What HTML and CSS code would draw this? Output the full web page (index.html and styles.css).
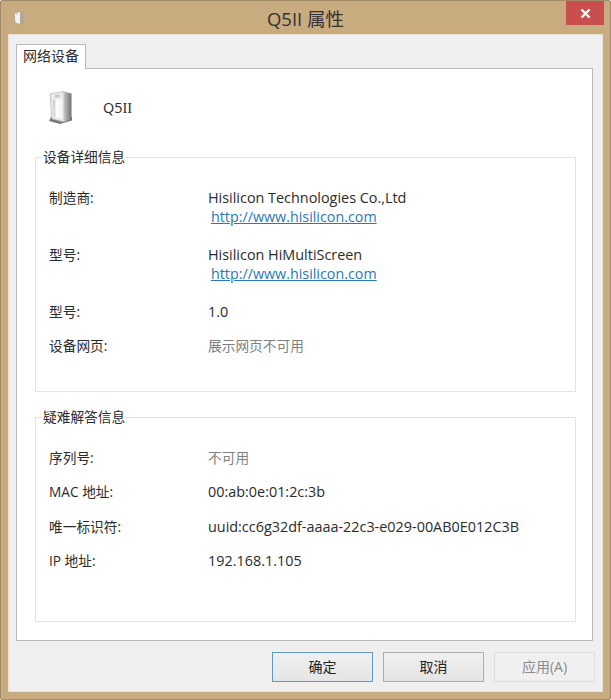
FILE: index.html
```html
<!DOCTYPE html>
<html lang="zh-CN">
<head>
<meta charset="utf-8">
<title>Q5II 属性</title>
<link rel="stylesheet" href="styles.css">
</head>
<body>
<div class="window">
  <header class="titlebar">
    <svg class="title-icon" viewBox="0 0 14 18" width="11" height="14" aria-hidden="true">
      <path d="M1.5 2.5 L9 1 L12.5 2.5 L12.5 15.5 L8 17 L2.5 15.5 Z" fill="#f2f1ed" stroke="#8d8a82" stroke-width="0.7"/>
      <path d="M9 1.5 L12.5 2.5 L12.5 15.5 L9 17 Z" fill="#a9a69d"/>
      <rect x="3.5" y="3.5" width="3" height="1.5" fill="#c4c9cc"/>
    </svg>
    <h1 class="title">Q5II 属性</h1>
    <button class="close" aria-label="关闭">
      <svg viewBox="0 0 11 11" width="11" height="11" aria-hidden="true"><path d="M1.5 1.5 L9.5 9.5 M9.5 1.5 L1.5 9.5" stroke="#fff" stroke-width="2.4"/></svg>
    </button>
  </header>
  <div class="client">
    <div class="tabs"><div class="tab">网络设备</div></div>
    <main class="panel">
      <div class="device">
        <svg class="device-icon" viewBox="0 0 32 36" width="32" height="36" aria-hidden="true">
          <defs>
            <linearGradient id="side" x1="0" x2="1" y1="0" y2="0"><stop offset="0" stop-color="#c4c4c3"/><stop offset="1" stop-color="#6f7172"/></linearGradient>
            <linearGradient id="inset" x1="0" x2="1" y1="0" y2="0"><stop offset="0" stop-color="#b9b9b9"/><stop offset="0.35" stop-color="#fdfdfd"/><stop offset="1" stop-color="#f3f3f3"/></linearGradient>
          </defs>
          <path d="M2 32 L13 35 L25 31.5 L25 28 L4 28 Z" fill="#4c4c4c" opacity="0.75"/>
          <path d="M3 5 L17 2.5 L17 33 L5 30 Z" fill="#e9e9e9" stroke="#a8a8a8" stroke-width="0.6"/>
          <path d="M6 11 L15.5 10 L15.5 30 L7 28 Z" fill="url(#inset)"/>
          <path d="M17 2.5 L24.5 4.5 L24.5 30 L17 33 Z" fill="url(#side)"/>
          <rect x="8" y="6" width="5" height="2.2" fill="#c2cbd1"/>
        </svg>
        <span class="device-name">Q5<span class="slab">II</span></span>
      </div>

      <section class="group group-details">
        <h2 class="legend">设备详细信息</h2>
        <div class="row row-tall"><span class="label">制造商:</span><div class="value">Hisilicon Technologies Co.,Ltd<a class="link" href="#">http://www.hisilicon.com</a></div></div>
        <div class="row row-tall"><span class="label">型号:</span><div class="value">Hisilicon HiMultiScreen<a class="link" href="#">http://www.hisilicon.com</a></div></div>
        <div class="row"><span class="label">型号:</span><div class="value">1.0</div></div>
        <div class="row"><span class="label">设备网页:</span><div class="value muted">展示网页不可用</div></div>
      </section>

      <section class="group group-trouble">
        <h2 class="legend">疑难解答信息</h2>
        <div class="row"><span class="label">序列号:</span><div class="value muted">不可用</div></div>
        <div class="row"><span class="label">MAC 地址:</span><div class="value">00:ab:0e:01:2c:3b</div></div>
        <div class="row"><span class="label">唯一标识符:</span><div class="value">uuid:cc6g32df-aaaa-22c3-e029-00AB0E012C3B</div></div>
        <div class="row"><span class="label">IP 地址:</span><div class="value">192.168.1.105</div></div>
      </section>
    </main>
    <footer class="actions">
      <button class="btn btn-default">确定</button>
      <button class="btn">取消</button>
      <button class="btn btn-disabled" disabled>应用(A)</button>
    </footer>
  </div>
</div>
</body>
</html>
```
FILE: styles.css
```css
* { box-sizing: border-box; }
html, body { margin: 0; height: 100%; }
body {
  width: 611px;
  height: 700px;
  overflow: hidden;
  font-family: "Open Sans", "Noto Sans CJK SC", sans-serif;
  font-size: 14.4px;
  color: #2b2b2b;
}
.window {
  width: 611px;
  height: 700px;
  display: flex;
  flex-direction: column;
  background: #c9ab80;
  border: 1px solid #a08a68;
  border-radius: 2px;
  padding: 0 7px 7px;
}
.titlebar {
  height: 33px;
  flex: none;
  display: flex;
  align-items: center;
  position: relative;
}
.title-icon { margin: 0 3px 0 5px; flex: none; }
.title {
  flex: 1;
  margin: 0 0 0 -19px;
  text-align: center;
  font-size: 18.5px;
  font-weight: 400;
  color: #333;
}
.close {
  position: absolute;
  top: 0;
  right: -1px;
  width: 38px;
  height: 24px;
  border: 0;
  padding: 0;
  background: #c94f4f;
  display: flex;
  align-items: center;
  justify-content: center;
}
.client {
  flex: 1;
  background: #efefef;
  border: 1px solid #e6e2da;
  padding: 9px 9px 0 7px;
  display: flex;
  flex-direction: column;
}
.tabs { height: 25px; flex: none; display: flex; position: relative; z-index: 1; }
.tab {
  width: 70px;
  height: 25px;
  background: #fff;
  border: 1px solid #b9b9b9;
  border-bottom: 0;
  font-size: 14px;
  line-height: 22px;
  text-align: center;
}
.panel {
  height: 573px;
  flex: none;
  margin-top: -1px;
  background: #fff;
  border: 1px solid #b9b9b9;
  padding: 0 16px 0 18px;
}
.device {
  display: flex;
  align-items: center;
  height: 88px;
  padding: 0 0 13px 12px;
}
.device-icon { flex: none; }
.device-name { margin-left: 24px; font-size: 14.4px; margin-top: 2px; }
.slab { font-family: "Liberation Serif", serif; font-size: 14.5px; }
.group {
  position: relative;
  border: 1px solid #e3e3e3;
  padding-left: 13px;
}
.group-details { height: 235px; padding-top: 30px; }
.group-trouble { height: 205px; margin-top: 25px; padding-top: 30px; }
.legend {
  position: absolute;
  top: -11px;
  left: 6px;
  margin: 0;
  padding: 0 1px;
  background: #fff;
  font-size: 13.7px;
  font-weight: 400;
  line-height: 20px;
}
.row {
  display: flex;
  height: 34.3px;
  line-height: 20px;
}
.row-tall { height: 57px; }
.label { width: 159px; flex: none; font-size: 13.7px; }
.value { flex: 1; }
.muted { color: #808080; font-size: 13.7px; }
.link {
  display: block;
  margin: -1.5px 0 0 3px;
  font-size: 14.3px;
  color: #2a78b8;
  text-decoration: underline;
}
.actions {
  flex: 1;
  display: flex;
  justify-content: flex-end;
  align-items: flex-start;
  gap: 10px;
  padding-top: 11px;
  margin-right: -2px;
}
.btn {
  width: 101px;
  height: 30px;
  font: 14px "Open Sans", "Noto Sans CJK SC", sans-serif;
  color: #222;
  border: 1px solid #acacac;
  background: linear-gradient(#f0f0f0, #e5e5e5);
  padding: 0 0 2px;
}
.btn-default { border-color: #5f9ccb; }
.btn-disabled { color: #8b8b8b; background: #f0f0f0; border-color: #dedede; }
```
